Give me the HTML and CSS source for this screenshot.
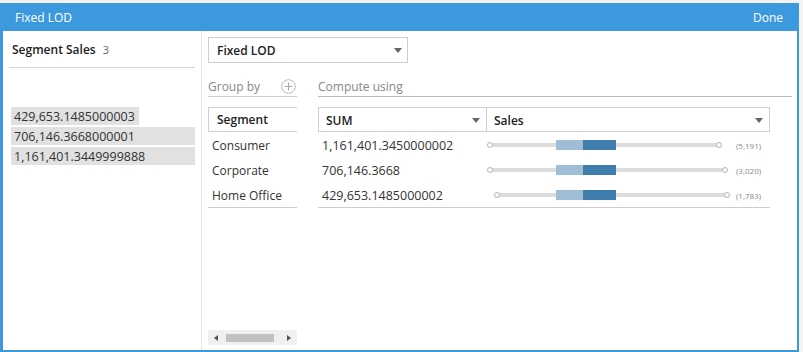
FILE: index.html
```html
<!DOCTYPE html>
<html lang="en">
<head>
  <meta charset="UTF-8">
  <title>Fixed LOD</title>
  <link rel="stylesheet" href="styles.css">
</head>
<body>
  <div class="dialog">
    <div class="titlebar">
      <span>Fixed LOD</span>
      <span class="done">Done</span>
    </div>
    <div class="content">
      <div class="left">
        <div class="field-title">Segment Sales <span class="count">3</span></div>
        <div class="values">
          <div class="value short">429,653.1485000003</div>
          <div class="value">706,146.3668000001</div>
          <div class="value">1,161,401.3449999888</div>
        </div>
      </div>
      <div class="right">
        <div class="select">
          <span>Fixed LOD</span>
          <span class="caret"></span>
        </div>
        <div class="sections">
          <div class="group-by">
            <span>Group by</span>
            <span class="plus">
              <svg width="15" height="15" viewBox="0 0 15 15"><circle cx="7.5" cy="7.5" r="6.8" fill="none" stroke="#b9b9b9" stroke-width="1"/><path d="M7.5 3.5v8M3.5 7.5h8" stroke="#a8a8a8" stroke-width="1"/></svg>
            </span>
          </div>
          <div class="compute">Compute using</div>
        </div>
        <div class="table">
          <div class="dim-col">
            <div class="dim-head">Segment</div>
            <div class="cell">Consumer</div>
            <div class="cell">Corporate</div>
            <div class="cell">Home Office</div>
          </div>
          <div class="measure-col">
            <div class="measure-head">
              <div class="agg">SUM <span class="caret"></span></div>
              <div class="fieldsel">Sales <span class="caret"></span></div>
            </div>
            <div class="mrow">
              <div class="num">1,161,401.3450000002</div>
              <div class="range">
                <div class="track" style="left:4px;width:229px"></div>
                <div class="q q1"></div><div class="q q2"></div>
                <span class="cnt">(5,191)</span>
              </div>
            </div>
            <div class="mrow">
              <div class="num">706,146.3668</div>
              <div class="range">
                <div class="track" style="left:4px;width:235px"></div>
                <div class="q q1"></div><div class="q q2"></div>
                <span class="cnt">(3,020)</span>
              </div>
            </div>
            <div class="mrow">
              <div class="num">429,653.1485000002</div>
              <div class="range">
                <div class="track" style="left:11px;width:230px"></div>
                <div class="q q1"></div><div class="q q2"></div>
                <span class="cnt">(1,783)</span>
              </div>
            </div>
          </div>
        </div>
        <div class="hscroll">
          <span class="arr arr-l"></span>
          <span class="thumb"></span>
          <span class="arr arr-r"></span>
        </div>
      </div>
    </div>
  </div>
</body>
</html>
```

FILE: styles.css
```css
body {
  margin: 0;
  background: #f3f3f3;
  font-family: "Open Sans", "Liberation Sans", sans-serif;
  color: #333;
  font-size: 12px;
}
.dialog {
  margin-top: 3px;
  width: 799px;
  height: 349px;
  display: flex;
  flex-direction: column;
  background: #3d99de;
}
.titlebar {
  height: 28px;
  display: flex;
  align-items: center;
  justify-content: space-between;
  padding: 0 16px 0 15px;
  color: #fff;
  font-size: 12px;
}
.content {
  flex: 1;
  display: flex;
  background: #fff;
  margin: 0 2px 2px 3px;
}
.left {
  width: 186px;
  padding: 0 6px;
  border-right: 1px solid #e4e4e4;
}
.field-title {
  height: 36px;
  line-height: 38px;
  padding-left: 3px;
  border-bottom: 1px solid #d4d4d4;
  font-weight: 600;
  color: #222;
}
.count {
  font-weight: normal;
  color: #666;
  font-size: 11px;
  margin-left: 4px;
}
.values {
  margin: 39px 0 0 2px;
  display: flex;
  flex-direction: column;
  gap: 2px;
}
.value {
  height: 18px;
  line-height: 19px;
  background: #e1e1e1;
  padding-left: 3px;
  font-size: 12.5px;
  color: #333;
}
.value.short {
  width: 125px;
}
.right {
  flex: 1;
  display: flex;
  flex-direction: column;
  padding: 6px 0 5px 6px;
}
.select {
  width: 185px;
  height: 23px;
  border: 1px solid #cfcfcf;
  display: flex;
  align-items: center;
  justify-content: space-between;
  padding: 1px 5px 0 8px;
  font-weight: 600;
  color: #222;
}
.caret {
  width: 0;
  height: 0;
  border-left: 4px solid transparent;
  border-right: 4px solid transparent;
  border-top: 5px solid #666;
}
.sections {
  display: flex;
  gap: 21px;
  margin-top: 14px;
}
.group-by {
  width: 89px;
  height: 19px;
  border-bottom: 1px solid #cfcfcf;
  display: flex;
  align-items: center;
  justify-content: space-between;
  color: #888;
}
.plus {
  display: flex;
  margin-right: 1px;
}
.compute {
  flex: 1;
  margin-right: 5px;
  height: 19px;
  line-height: 19px;
  border-bottom: 1px solid #bcbcbc;
  color: #888;
}
.table {
  display: flex;
  gap: 21px;
  margin-top: 10px;
}
.dim-col {
  width: 89px;
  border-bottom: 1px solid #cfcfcf;
}
.dim-head {
  height: 23px;
  line-height: 24px;
  border: 1px solid #cfcfcf;
  border-right: none;
  padding-left: 8px;
  font-weight: 600;
  color: #222;
}
.cell {
  height: 25px;
  line-height: 27px;
  padding-left: 4px;
}
.measure-col {
  width: 452px;
  border-bottom: 1px solid #cfcfcf;
}
.measure-head {
  display: flex;
  height: 25px;
}
.agg, .fieldsel {
  display: flex;
  align-items: center;
  justify-content: space-between;
  border: 1px solid #cfcfcf;
  padding: 1px 6px 0 7px;
  font-weight: 600;
  color: #222;
}
.agg {
  width: 154px;
}
.fieldsel {
  flex: 1;
  border-left: none;
}
.mrow {
  display: flex;
  height: 25px;
  align-items: center;
}
.num {
  width: 164px;
  padding: 2px 0 0 4px;
  font-size: 12.5px;
}
.range {
  position: relative;
  flex: 1;
  height: 25px;
}
.track {
  position: absolute;
  top: 11px;
  height: 4px;
  background: #dcdcdc;
}
.track::before, .track::after {
  content: "";
  position: absolute;
  top: -1px;
  width: 4px;
  height: 4px;
  border: 1px solid #b4b4b4;
  border-radius: 50%;
  background: #fff;
}
.track::before { left: -3px; }
.track::after { right: -3px; }
.q {
  position: absolute;
  top: 8px;
  height: 10px;
}
.q1 {
  left: 70px;
  width: 27px;
  background: #9fbed6;
}
.q2 {
  left: 97px;
  width: 33px;
  background: #3f7eac;
}
.cnt {
  position: absolute;
  left: 250px;
  top: 8px;
  font-size: 8px;
  color: #888;
}
.hscroll {
  margin-top: auto;
  width: 89px;
  height: 15px;
  background: #f0f0f0;
  display: flex;
  align-items: center;
  justify-content: space-between;
  padding: 0 6px;
  box-sizing: border-box;
}
.thumb {
  width: 49px;
  height: 8px;
  background: #c1c1c1;
  margin-right: auto;
  margin-left: 8px;
}
.arr {
  width: 0;
  height: 0;
  border-top: 3px solid transparent;
  border-bottom: 3px solid transparent;
}
.arr-l { border-right: 4px solid #555; }
.arr-r { border-left: 4px solid #555; margin-left: 13px; }
```
